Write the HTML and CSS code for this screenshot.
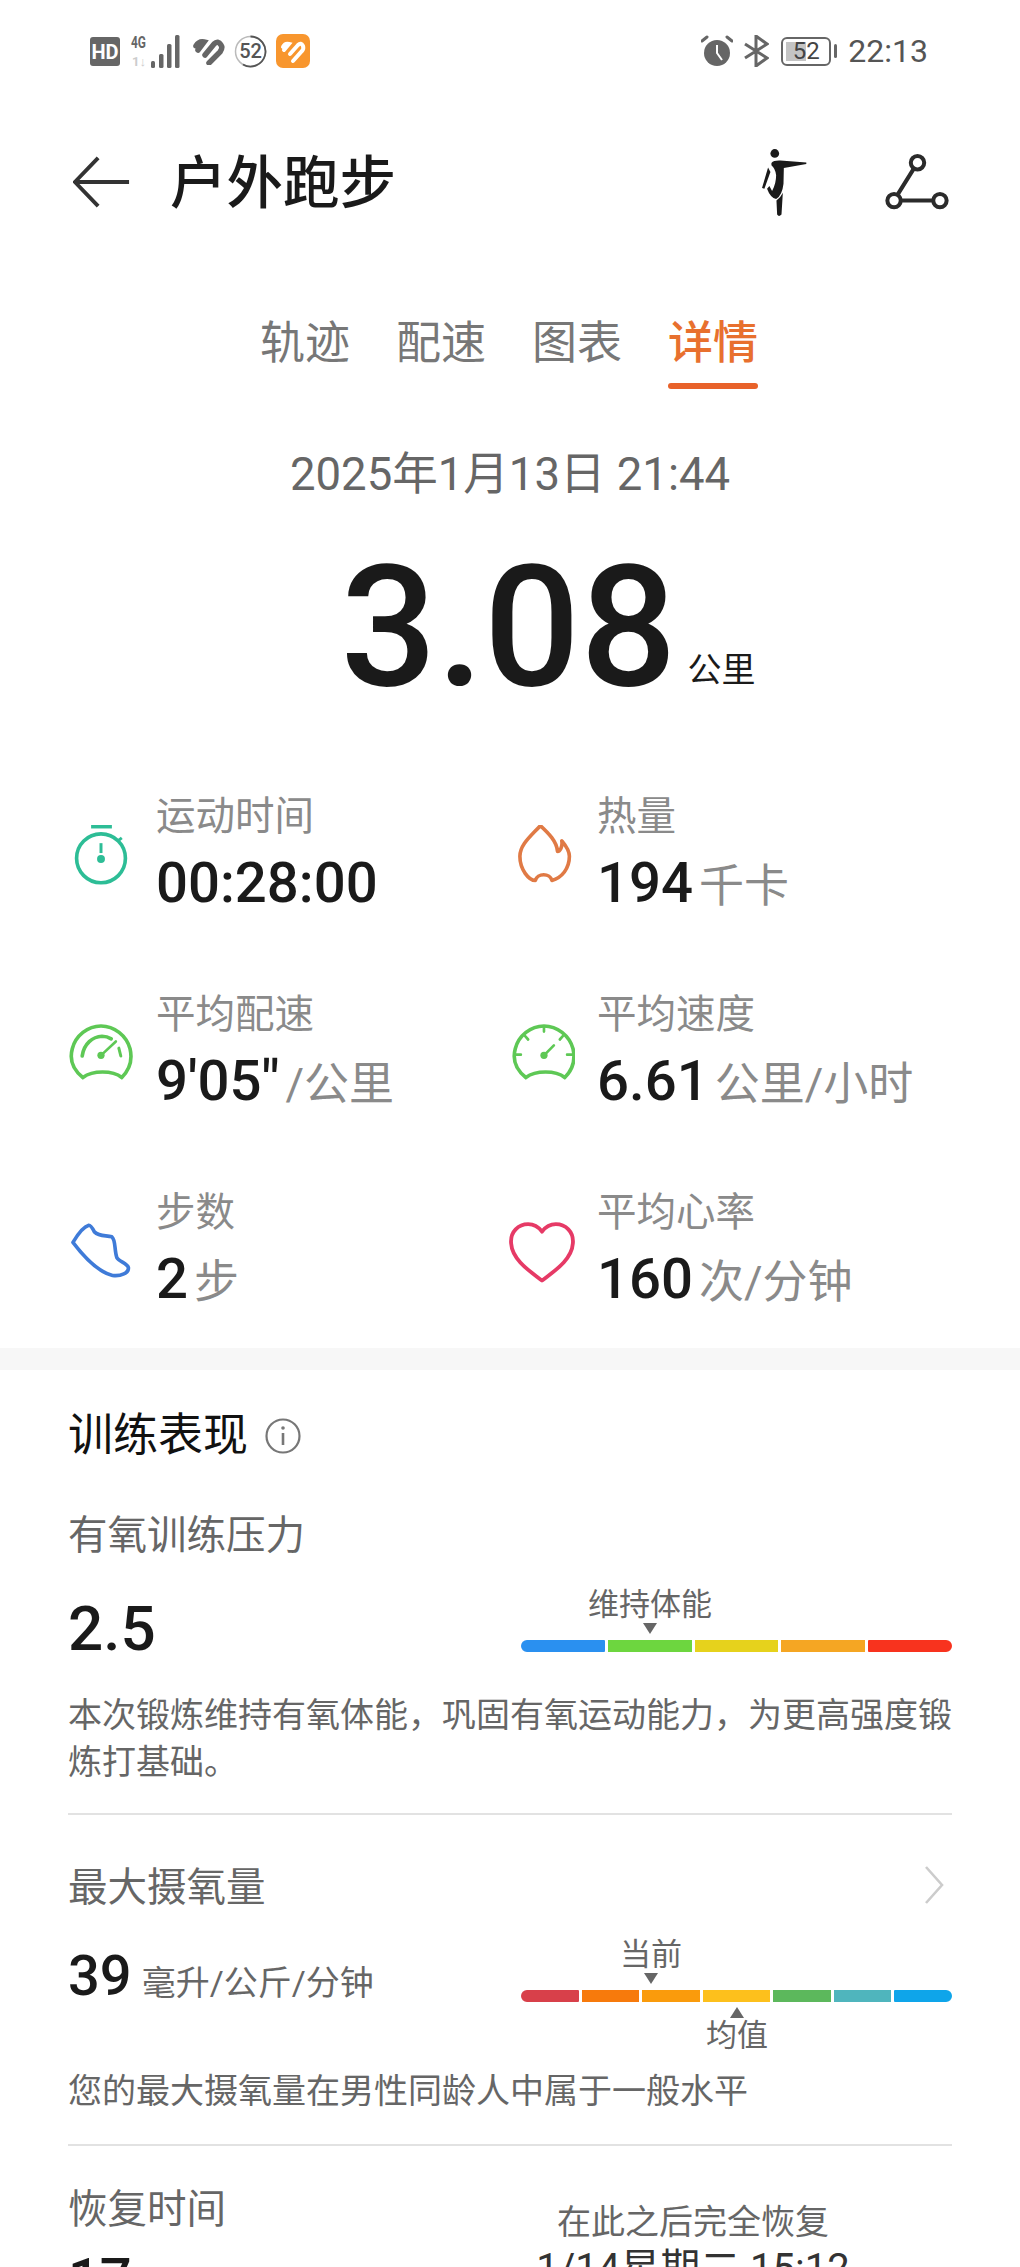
FILE: index.html
```html
<!DOCTYPE html>
<html lang="zh-CN">
<head>
<meta charset="utf-8">
<title>户外跑步</title>
<link rel="stylesheet" href="styles.css">
</head>
<body>
<div class="page">
  <div class="status">
    <div class="status-left">
      <svg class="s-hd" viewBox="0 0 30 29"><rect width="30" height="29" rx="3" fill="#666"/><text x="15" y="22" class="hd-t">HD</text></svg>
      <svg class="s-sig" viewBox="0 0 51 33">
        <text x="0" y="13" class="sig-t" textLength="15" lengthAdjust="spacingAndGlyphs">4G</text>
        <text x="1" y="31" class="sig-t sig-l" textLength="14" lengthAdjust="spacingAndGlyphs">1↓</text>
        <rect x="20" y="26" width="4" height="7" rx="1.5" fill="#666"/>
        <rect x="28" y="19" width="4.5" height="14" rx="1.5" fill="#666"/>
        <rect x="36" y="9" width="4.5" height="24" rx="1.5" fill="#666"/>
        <rect x="44" y="0" width="4.5" height="33" rx="1.5" fill="#666"/>
      </svg>
      <svg class="s-heart" viewBox="0 0 32 28"><path d="M12 18 21 7Q25 3 28 8 30 11 27 15L16 26" fill="none" stroke="#666" stroke-width="5.5" stroke-linecap="round"/><path d="M3 9Q6 4 11 5L5 13" fill="none" stroke="#666" stroke-width="5.5" stroke-linecap="round"/></svg>
      <svg class="s-ring" viewBox="0 0 33 33"><circle cx="16.5" cy="16.5" r="15" fill="none" stroke="#bbb" stroke-width="1.5"/><path d="M16.5 1.5A15 15 0 1 1 9 29.5" fill="none" stroke="#555" stroke-width="1.8"/><text x="16.5" y="23" class="ring-t">52</text></svg>
      <svg class="s-app" viewBox="0 0 34 34"><rect width="34" height="34" rx="7" fill="#f8962e"/><g fill="none" stroke="#fff" stroke-width="4" stroke-linecap="round"><path d="M14 20 22 11Q25 8 27 12 28 15 26 17L17 27"/><path d="M7 13Q9 9 13 10L8 16"/></g></svg>
    </div>
    <div class="status-right">
      <svg class="s-alarm" viewBox="0 0 32 32"><circle cx="16" cy="18" r="13" fill="#666"/><path d="M16 10V18L21 25" fill="none" stroke="#fff" stroke-width="2"/><path d="M1 6 6 2M31 6 26 2" stroke="#666" stroke-width="3" stroke-linecap="round"/></svg>
      <svg class="s-bt" viewBox="0 0 26 32"><path d="M2 9 24 23 13 31V1L24 9 2 23" fill="none" stroke="#666" stroke-width="3"/></svg>
      <div class="battery"><span class="battery-fill"></span><span class="battery-num">52</span></div>
      <span class="battery-nub"></span>
      <span class="clock">22:13</span>
    </div>
  </div>

  <div class="header">
    <svg class="back" viewBox="0 0 60 54"><path d="M26 2 2 27 26 52M2 27H58" fill="none" stroke="#333" stroke-width="4"/></svg>
    <h1 class="title">户外跑步</h1>
    <svg class="runner" viewBox="175 75 155 220"><circle cx="228" cy="100" r="13" fill="#1a1a1a"/><path d="M218 128Q225 120 245 121L322 127V131L255 143 254 190Q250 225 232 236 215 232 205 205L212 197 220 212Q232 190 232 165 230 145 218 135Z" fill="#1a1a1a"/><path d="M208 142 215 155 197 205 190 203Z" fill="#1a1a1a"/><path d="M252 217 248 282Q240 290 235 282L233 240Q245 232 252 217Z" fill="#1a1a1a"/></svg>
    <svg class="route" viewBox="555 90 200 185"><g fill="none" stroke="#2b2b2b" stroke-width="12"><circle cx="655" cy="125" r="20"/><circle cx="585" cy="238" r="20"/><circle cx="722" cy="238" r="20"/><path d="M643 144 597 218M606 238H701"/></g></svg>
  </div>

  <div class="tabs">
    <span class="tab">轨迹</span>
    <span class="tab">配速</span>
    <span class="tab">图表</span>
    <span class="tab tab-on">详情</span>
  </div>

  <div class="date">2025年1月13日 21:44</div>
  <div class="distance"><span class="distance-num">3.08</span><span class="distance-unit">公里</span></div>

  <div class="metrics">
    <div class="metric">
      <svg class="m-icon" viewBox="65 127 180 200"><g fill="none" stroke="#2dbd96" stroke-width="11"><circle cx="155" cy="228" r="74"/><path d="M125 132H188" stroke-width="11"/><path d="M155 182V212" stroke-width="9"/><path d="M205 176 218 166" stroke-width="9"/></g><circle cx="155" cy="230" r="12" fill="#2dbd96"/></svg>
      <div><div class="m-label">运动时间</div><div class="m-val"><b>00:28:00</b></div></div>
    </div>
    <div class="metric">
      <svg class="m-icon" viewBox="55 130 200 200"><path d="M150 132C120 165 88 190 88 225 88 265 115 298 135 298 140 275 180 275 185 298 215 290 238 262 238 225 238 205 225 190 215 178 218 195 210 210 202 210 200 180 175 155 150 132Z" fill="none" stroke="#e07a45" stroke-width="11" stroke-linejoin="round"/></svg>
      <div><div class="m-label">热量</div><div class="m-val"><b>194</b><span>千卡</span></div></div>
    </div>
    <div class="metric">
      <svg class="m-icon" viewBox="55 722 200 200"><g fill="none" stroke="#5ec855" stroke-width="11" stroke-linecap="round"><path d="M218 887C245 860 250 830 243 800 232 760 195 731 155 731 115 731 78 760 68 800 60 830 68 862 100 887 130 865 190 865 218 887Z"/><path d="M98 822C103 785 130 763 158 762 168 762 178 765 186 770"/><path d="M209 798 215 822" stroke-width="9"/><path d="M155 820 200 778" stroke-width="8"/></g><circle cx="155" cy="820" r="11" fill="#5ec855"/></svg>
      <div><div class="m-label">平均配速</div><div class="m-val"><b>9'05"</b><span class="u-slash">/公里</span></div></div>
    </div>
    <div class="metric">
      <svg class="m-icon" viewBox="56 722 200 200"><g fill="none" stroke="#5ec855" stroke-width="11" stroke-linecap="round"><path d="M225 887C252 860 257 830 250 800 239 760 202 731 162 731 122 731 85 760 75 800 67 830 75 862 107 887 137 865 197 865 225 887Z"/><path d="M162 732V748M105 762 114 772M219 762 210 772M76 818H92M248 818H232" stroke-width="8"/><path d="M162 820 192 790" stroke-width="8"/></g><circle cx="162" cy="820" r="11" fill="#5ec855"/></svg>
      <div><div class="m-label">平均速度</div><div class="m-val"><b>6.61</b><span>公里/小时</span></div></div>
    </div>
    <div class="metric">
      <svg class="m-icon" viewBox="55 117 200 200"><path d="M118 130C100 135 80 165 70 182 95 215 140 270 190 282 215 285 240 275 238 258 235 245 210 240 203 228 195 205 200 175 188 165 170 160 150 165 135 150 130 140 125 130 118 130Z" fill="none" stroke="#3f7bd8" stroke-width="11" stroke-linejoin="round"/></svg>
      <div><div class="m-label">步数</div><div class="m-val"><b>2</b><span>步</span></div></div>
    </div>
    <div class="metric">
      <svg class="m-icon" viewBox="2 3 62 62"><path d="M33 59C23 51 5 40 4 24 3 13 11 6 20 6 26 6 30 9 33 13 36 9 40 6 46 6 55 6 63 13 62 24 61 40 43 51 33 59Z" fill="none" stroke="#e63a66" stroke-width="3.6" stroke-linejoin="round"/></svg>
      <div><div class="m-label">平均心率</div><div class="m-val"><b>160</b><span>次/分钟</span></div></div>
    </div>
  </div>

  <div class="band"></div>

  <div class="section">
    <div class="sec-title">训练表现<svg class="info" viewBox="0 0 36 36"><circle cx="18" cy="18" r="16.5" fill="none" stroke="#777" stroke-width="2.2"/><path d="M18 15V27" stroke="#777" stroke-width="2.6"/><circle cx="18" cy="10" r="1.8" fill="#777"/></svg></div>

    <div class="block block-a">
      <div class="b-label">有氧训练压力</div>
      <div class="b-row">
        <div class="b-val"><b class="big">2.5</b></div>
        <div class="meter meter-a">
          <span class="mark mark-train">维持体能</span>
          <span class="seg seg-end-l c-blue"></span><span class="seg c-green"></span><span class="seg c-yellow"></span><span class="seg c-amber"></span><span class="seg seg-end-r c-red"></span>
        </div>
      </div>
      <p class="b-text">本次锻炼维持有氧体能，巩固有氧运动能力，为更高强度锻炼打基础。</p>
    </div>

    <div class="block block-b">
      <div class="b-label">最大摄氧量<svg class="chev" viewBox="0 0 20 38"><path d="M2 1 18 19 2 37" fill="none" stroke="#ccc" stroke-width="2.6"/></svg></div>
      <div class="b-row b-row-vo">
        <div class="b-val"><b>39</b><span>毫升/公斤/分钟</span></div>
        <div class="meter meter-b">
          <span class="mark mark-now">当前</span>
          <span class="seg seg-end-l v1"></span><span class="seg v2"></span><span class="seg v3"></span><span class="seg v4"></span><span class="seg v5"></span><span class="seg v6"></span><span class="seg seg-end-r v7"></span>
          <span class="mark mark-avg">均值</span>
        </div>
      </div>
      <p class="b-text b-text-vo">您的最大摄氧量在男性同龄人中属于一般水平</p>
    </div>

    <div class="recover">
      <div class="rec-left">
        <div class="b-label">恢复时间</div>
        <div class="rec-val"><b>17</b></div>
      </div>
      <div class="rec-right">
        <div class="rec-note">在此之后完全恢复</div>
        <div class="rec-date">1/14星期二 15:12</div>
      </div>
    </div>
  </div>
</div>
</body>
</html>
```

FILE: styles.css
```css
* { box-sizing: border-box; }
html, body { margin: 0; padding: 0; background: #fff; }
body { font-family: Roboto, "Noto Sans CJK SC", sans-serif; color: #1a1a1a; }
.page { width: 1020px; height: 2267px; overflow: hidden; display: flex; flex-direction: column; }

/* status bar */
.status { height: 102px; flex: none; display: flex; justify-content: space-between; align-items: center; padding: 0 92px 0 90px; }
.status-left, .status-right { display: flex; align-items: center; }
.s-hd { width: 30px; height: 29px; }
.s-sig { width: 51px; height: 33px; margin-left: 11px; overflow: visible; }
.s-heart { width: 32px; height: 28px; margin-left: 11px; }
.s-ring { width: 33px; height: 33px; margin-left: 9px; }
.s-app { width: 34px; height: 34px; margin-left: 9px; }
.hd-t { font: 700 20px Roboto, sans-serif; fill: #fff; text-anchor: middle; }
.sig-t { font: 700 16px Roboto, sans-serif; fill: #666; }
.sig-l { font-size: 13px; fill: #ccc; }
.ring-t { font: 500 20px Roboto, sans-serif; fill: #555; text-anchor: middle; }
.s-alarm { width: 32px; height: 32px; }
.s-bt { width: 26px; height: 32px; margin-left: 10px; }
.battery { position: relative; width: 50px; height: 29px; margin-left: 12px; border: 2.5px solid #666; border-radius: 6px; display: flex; align-items: center; justify-content: center; }
.battery-fill { position: absolute; left: 3px; top: 3px; bottom: 3px; width: 20px; background: #c4c4c4; }
.battery-num { position: relative; font-size: 24px; color: #444; line-height: 1; }
.battery-nub { width: 3px; height: 14px; background: #666; margin-left: 3px; border-radius: 2px; }
.clock { font-size: 32px; color: #555; margin-left: 11px; line-height: 1; }

/* header */
.header { height: 160px; flex: none; display: flex; align-items: center; padding: 0 69px 0 73px; }
.back { width: 58px; height: 54px; flex: none; }
.title { margin: 6px 0 0 39px; font-size: 56.5px; font-weight: 500; line-height: 1.2; color: #1a1a1a; flex: 1; }
.runner { width: 52px; height: 74px; flex: none; margin-right: 75px; }
.route { width: 67px; height: 62px; flex: none; }

/* tabs */
.tabs { margin-top: 52px; display: flex; justify-content: center; gap: 46px; padding-right: 2px; flex: none; }
.tab { font-size: 45px; line-height: 60px; color: #777; padding-bottom: 15px; position: relative; }
.tab-on { color: #e8702e; font-weight: 500; }
.tab-on::after { content: ""; position: absolute; left: 0; right: 0; bottom: 0; height: 6px; border-radius: 3px; background: #e8622a; }

/* hero */
.date { margin-top: 56px; text-align: center; font-size: 45.5px; line-height: 60px; color: #666; flex: none; }
.distance { text-align: center; margin-top: 32px; height: 180px; padding-left: 76px; flex: none; white-space: nowrap; }
.distance-num { font-size: 169.5px; font-weight: 500; line-height: 180px; }
.distance-unit { font-size: 34px; margin-left: 11px; color: #1a1a1a; vertical-align: 3px; line-height: 1; }

/* metrics */
.metrics { display: grid; grid-template-columns: 441px 1fr; row-gap: 74px; padding-left: 68px; margin-top: 75px; flex: none; }
.metric { display: flex; align-items: flex-start; gap: 22px; }
.m-icon { width: 66px; height: 66px; flex: none; margin-top: 33px; }
.m-label { font-size: 39.5px; line-height: 50px; color: #8a8a8a; }
.m-val { margin-top: 8px; height: 66px; line-height: 66px; white-space: nowrap; }
.m-val b { font-size: 56.3px; font-weight: 500; color: #1a1a1a; }
.m-val span { font-size: 45px; color: #8a8a8a; margin-left: 6px; }
.m-val .u-slash { margin-left: 6px; }

/* band */
.band { height: 22px; background: #f7f7f7; margin-top: 36px; flex: none; }

/* section */
.section { padding: 0 68px; flex: none; }
.sec-title { margin-top: 36px; display: flex; align-items: center; font-size: 45px; line-height: 60px; font-weight: 400; color: #111; }
.info { width: 36px; height: 36px; margin-left: 17px; }
.block { border-bottom: 2px solid #e2e2e2; }
.block-a { margin-top: 45px; height: 304px; }
.block-b { margin-top: 48px; height: 283px; }
.b-label { font-size: 39.5px; line-height: 50px; color: #666; display: flex; justify-content: space-between; align-items: center; }
.chev { width: 20px; height: 38px; margin: -6px 8px 0 0; }
.b-row { display: flex; justify-content: space-between; align-items: center; margin-top: 31px; height: 90px; }
.b-row-vo { margin-top: 25px; }
.b-val { line-height: 70px; white-space: nowrap; }
.b-val b { font-size: 56px; font-weight: 500; }
.b-val .big { font-size: 62px; }
.b-val span { font-size: 34px; color: #666; margin-left: 10px; }
.b-text { margin: 10px 0 0; font-size: 34px; line-height: 47px; color: #666; }
.b-text-vo { margin-top: 40px; }

/* meters */
.meter { position: relative; width: 431px; display: flex; gap: 3px; height: 12px; }
.meter-a { margin-top: 17px; }
.meter-b { margin-top: 25px; }
.seg { flex: 1 1 0; height: 12px; }
.seg-end-l { border-radius: 6px 1px 1px 6px; }
.seg-end-r { border-radius: 1px 6px 6px 1px; }
.c-blue { background: #2a90f0; } .c-green { background: #6dd63f; } .c-yellow { background: #e6d21c; } .c-amber { background: #f5a623; } .c-red { background: #f8331e; }
.v1 { background: #d8404a; } .v2 { background: #f77a0c; } .v3 { background: #fa9b0c; } .v4 { background: #fdc01c; flex-grow: 1.16; } .v5 { background: #5cb85c; } .v6 { background: #4fb5bd; } .v7 { background: #0ea5ea; }
.mark { position: absolute; font-size: 31px; line-height: 36px; color: #666; white-space: nowrap; transform: translateX(-50%); }
.mark-train { left: 129px; bottom: 29px; }
.mark-now { left: 130px; bottom: 29px; }
.mark-avg { left: 216px; top: 28px; }
.mark::after { content: ""; position: absolute; left: 50%; margin-left: -7px; border-left: 7px solid transparent; border-right: 7px solid transparent; }
.mark-train::after, .mark-now::after { top: 36px; border-top: 11px solid #666; }
.mark-avg::before { content: ""; position: absolute; left: 50%; margin-left: -7px; top: -11px; border-left: 7px solid transparent; border-right: 7px solid transparent; border-bottom: 11px solid #666; }
.mark-avg::after { display: none; }

/* recovery */
.recover { margin-top: 39px; display: flex; }
.rec-left { width: 422px; }
.rec-val { margin-top: 11px; line-height: 66px; }
.rec-val b { font-size: 56px; font-weight: 500; }
.rec-right { margin-left: 43px; text-align: center; margin-top: 14px; width: 320px; }
.rec-note { font-size: 34px; line-height: 46px; color: #666; }
.rec-date { font-size: 40px; line-height: 56px; margin-top: -4px; color: #333; white-space: nowrap; }
```
